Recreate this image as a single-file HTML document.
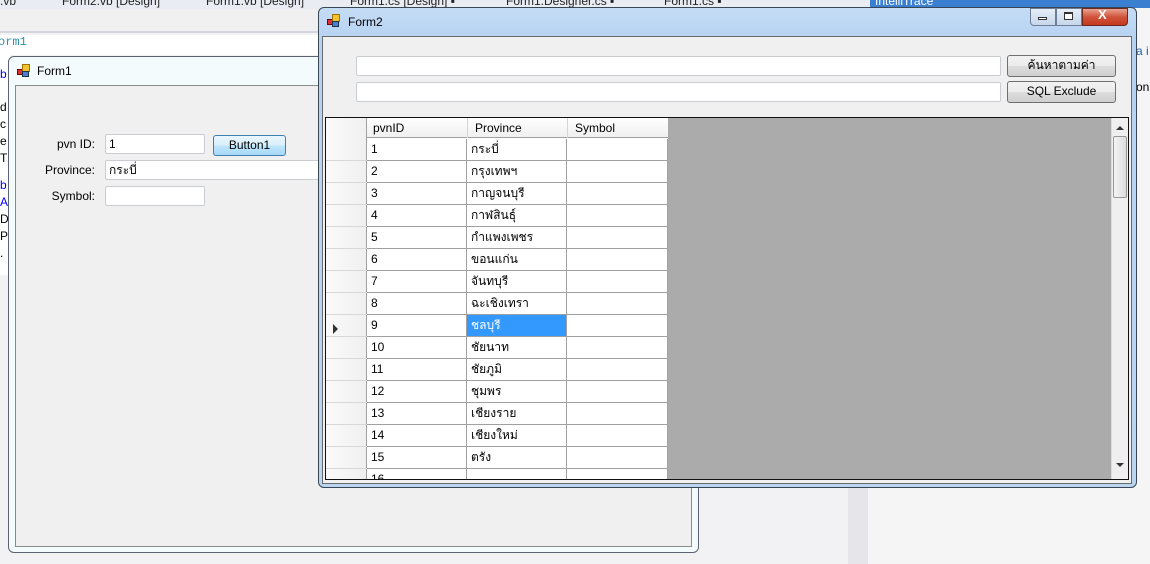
<!DOCTYPE html>
<html><head><meta charset="utf-8"><style>
*{margin:0;padding:0;box-sizing:border-box}
body{width:1150px;height:564px;overflow:hidden;background:#f2f2f4;font-family:"Liberation Sans","Noto Sans CJK SC",sans-serif;font-size:12px;color:#000;position:relative}
.a{position:absolute}
.tb{position:absolute;background:#fff;border:1px solid #c9cdd2;border-radius:2px;padding:2px 3px;font-size:12px;line-height:14px}
.btn{position:absolute;border:1px solid #707070;border-radius:3px;background:linear-gradient(#f2f2f2,#ebebeb 50%,#dddddd 51%,#cfcfcf);text-align:center;font-size:12px;line-height:19px}
.cell{position:absolute;background:#fff;border-right:1px solid #a0a0a0;border-bottom:1px solid #a0a0a0;padding-left:4px;line-height:21px;font-size:12px}
.lbl{position:absolute;width:90px;text-align:right;left:5px}
</style></head><body>
<div class="a" style="left:0;top:0;width:1150px;height:9px;background:#e9ecf3"></div>
<div class="a" style="left:0;top:-6px;font-size:12px;color:#222;white-space:nowrap">
<span class="a" style="left:0">.vb</span><span class="a" style="left:62px">Form2.vb [Design]</span><span class="a" style="left:206px">Form1.vb [Design]</span><span class="a" style="left:350px">Form1.cs [Design] ▪</span><span class="a" style="left:506px">Form1.Designer.cs ▪</span><span class="a" style="left:664px">Form1.cs ▪</span></div>
<div class="a" style="left:870px;top:0;width:280px;height:8px;background:#3a7fd0"></div>
<div class="a" style="left:875px;top:-6px;color:#fff;font-size:12px">IntelliTrace</div>
<div class="a" style="left:0;top:9px;width:320px;height:24px;background:#f0f0f0;border-bottom:2px solid #d4d6de"></div>
<div class="a" style="left:0;top:35px;width:320px;height:20px;background:#fff"></div>
<div class="a" style="left:-2px;top:35px;font-family:'Liberation Mono',monospace;font-size:12px;color:#2b91af">orm1</div>
<div class="a" style="left:0;top:55px;width:10px;height:220px;background:#fff"></div>
<div class="a" style="left:0;top:66px;font-size:12px;line-height:17px;color:#000">
<div style="color:#00f">b</div><div style="height:16px"></div><div>d</div><div>c</div><div>e</div><div>T</div><div style="height:10px"></div><div style="color:#00f">b</div><div style="color:#00f">A</div><div>D</div><div>P</div><div>.</div></div>
<div class="a" style="left:848px;top:35px;width:20px;height:529px;background:#e6e6ea"></div>
<div class="a" style="left:868px;top:8px;width:282px;height:556px;background:#f5f5f5"></div>
<div class="a" style="left:1136px;top:44px;color:#1e5fb4">a i</div>
<div class="a" style="left:1136px;top:80px">on</div>
<!-- Form1 -->
<div class="a" style="left:8px;top:56px;width:691px;height:497px;border:1px solid #5b6370;border-radius:6px;background:#f3fbfd"></div>
<div class="a" style="left:17px;top:64px;width:14px;height:14px">
<div class="a" style="left:0;top:5px;width:6px;height:6px;background:#d33;border:1px solid #700"></div>
<div class="a" style="left:5px;top:0;width:8px;height:8px;background:#f4c430;border:1px solid #a07000"></div>
<div class="a" style="left:5px;top:7px;width:7px;height:6px;background:#4a7fd8;border:1px solid #234"></div></div>
<div class="a" style="left:37px;top:64px;font-size:12px">Form1</div>
<div class="a" style="left:15px;top:85px;width:677px;height:462px;background:#f0f0f0;border:1px solid #8a8a8a"></div>
<div class="lbl" style="top:137px">pvn ID:</div>
<div class="lbl" style="top:163px">Province:</div>
<div class="lbl" style="top:189px">Symbol:</div>
<div class="tb" style="left:105px;top:134px;width:100px;height:20px">1</div>
<div class="btn" style="left:213px;top:135px;width:73px;height:21px;border-color:#3c7fb1;background:linear-gradient(#eaf6fd,#d9f0fc 50%,#bee6fd 51%,#a7d9f5)">Button1</div>
<div class="tb" style="left:105px;top:160px;width:220px;height:20px">กระบี่</div>
<div class="tb" style="left:105px;top:186px;width:100px;height:20px"></div>
<!-- Form2 -->
<div class="a" style="left:318px;top:7px;width:819px;height:481px;border:1px solid #3b4655;border-radius:6px;background:linear-gradient(#c5dcf5,#b6d3f2 30px,#b9d5f2)"></div>
<div class="a" style="left:327px;top:14px;width:14px;height:14px">
<div class="a" style="left:0;top:5px;width:6px;height:6px;background:#d33;border:1px solid #700"></div>
<div class="a" style="left:5px;top:0;width:8px;height:8px;background:#f4c430;border:1px solid #a07000"></div>
<div class="a" style="left:5px;top:7px;width:7px;height:6px;background:#4a7fd8;border:1px solid #234"></div></div>
<div class="a" style="left:348px;top:15px;font-size:12px">Form2</div>
<div class="a" style="left:1030px;top:8px;width:26px;height:18px;border:1px solid #6d7d93;border-radius:0 0 0 4px;background:linear-gradient(#e6eef8,#c6d6ea)"></div>
<div class="a" style="left:1038px;top:17px;width:9px;height:3px;border:1px solid #333;background:#fff"></div>
<div class="a" style="left:1056px;top:8px;width:26px;height:18px;border:1px solid #6d7d93;background:linear-gradient(#e6eef8,#c6d6ea)"></div>
<div class="a" style="left:1064px;top:12px;width:9px;height:8px;border:1px solid #333;border-top-width:2px;background:#fff"></div>
<div class="a" style="left:1082px;top:8px;width:46px;height:18px;border:1px solid #6d2a20;border-radius:0 0 4px 0;background:linear-gradient(#e8a493,#d0533a 50%,#c23a1e)"></div>
<div class="a" style="left:1098px;top:7px;color:#fff;font-weight:bold;font-size:13px">X</div>
<div class="a" style="left:322px;top:36px;width:810px;height:448px;background:#f0f0f0;border:1px solid #6a6a6a"></div>
<div class="tb" style="left:356px;top:56px;width:645px;height:20px"></div>
<div class="tb" style="left:356px;top:82px;width:645px;height:20px"></div>
<div class="btn" style="left:1007px;top:55px;width:109px;height:22px">ค้นหาตามค่า</div>
<div class="btn" style="left:1007px;top:81px;width:109px;height:22px">SQL Exclude</div>
<div class="a" style="left:325px;top:117px;width:804px;height:363px;border:1px solid #111;background:#ababab;overflow:hidden">
<div class="a" style="left:0;top:0;width:342px;height:362px;background:#fff"></div>
<div class="a" style="left:0;top:0;width:41px;height:362px;background:linear-gradient(90deg,#fafafa,#f0f0f0);border-right:1px solid #a0a0a0"></div>
<div class="a" style="left:41px;top:0;width:301px;height:20px;background:linear-gradient(#fff,#f0f0f0);border-bottom:1px solid #a0a0a0"></div>
<div class="a" style="left:47px;top:3px">pvnID</div>
<div class="a" style="left:141px;top:0;height:20px;border-left:1px solid #d5d5d5"></div>
<div class="a" style="left:149px;top:3px">Province</div>
<div class="a" style="left:241px;top:0;height:20px;border-left:1px solid #d5d5d5"></div>
<div class="a" style="left:249px;top:3px">Symbol</div>
<div id="rows"></div>
<div class="a" style="left:7px;top:206px;width:0;height:0;border-left:5px solid #333;border-top:5px solid transparent;border-bottom:5px solid transparent"></div>
<div class="a" style="left:785px;top:0;width:17px;height:362px;background:#efefef;border-left:1px solid #ddd"></div>
<div class="a" style="left:790px;top:8px;border-bottom:4px solid #333;border-left:4px solid transparent;border-right:4px solid transparent"></div>
<div class="a" style="left:787px;top:18px;width:14px;height:62px;border:1px solid #979797;border-radius:2px;background:linear-gradient(90deg,#f4f4f4,#dcdcdc)"></div>
<div class="a" style="left:790px;top:345px;border-top:4px solid #333;border-left:4px solid transparent;border-right:4px solid transparent"></div>
</div>
<script>
var p=["กระบี่","กรุงเทพฯ","กาญจนบุรี","กาฬสินธุ์","กำแพงเพชร","ขอนแก่น","จันทบุรี","ฉะเชิงเทรา","ชลบุรี","ชัยนาท","ชัยภูมิ","ชุมพร","เชียงราย","เชียงใหม่","ตรัง",""];
var h="";
for(var i=0;i<16;i++){var t=21+i*22;
h+='<div class="a" style="left:0;top:'+(t+21)+'px;width:41px;border-bottom:1px solid #d8d8d8"></div>';
h+='<div class="cell" style="left:41px;top:'+t+'px;width:100px;height:22px">'+(i+1)+'</div>';
var sel=i==8?';background:#3399ff;color:#fff':'';
h+='<div class="cell" style="left:141px;top:'+t+'px;width:100px;height:22px'+sel+'">'+p[i]+'</div>';
h+='<div class="cell" style="left:241px;top:'+t+'px;width:101px;height:22px"></div>';}
document.getElementById("rows").innerHTML=h;
</script>
</body></html>
